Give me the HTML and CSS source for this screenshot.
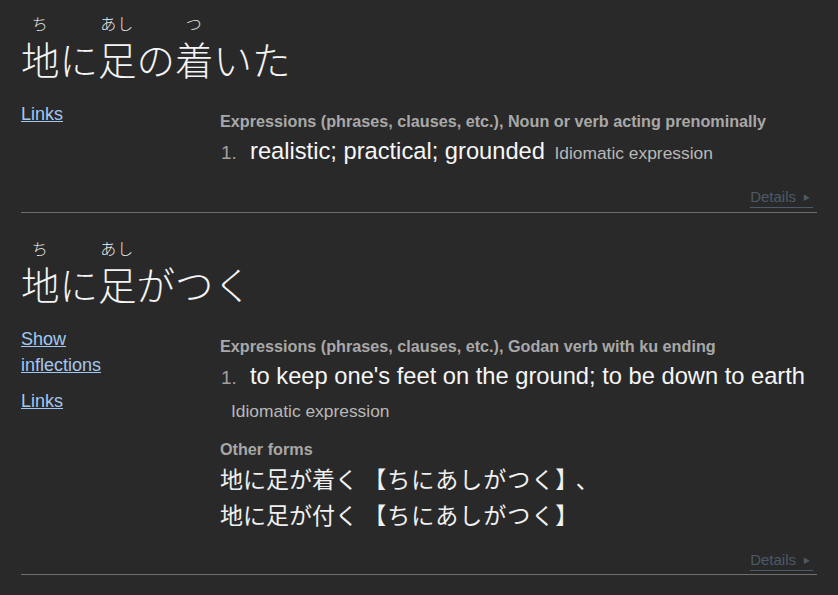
FILE: index.html
```html
<!DOCTYPE html>
<html lang="ja">
<head>
    <meta charset="UTF-8">
    <meta name="viewport" content="width=device-width, initial-scale=1.0">
    <title>地に足 - 検索結果</title>
    <link rel="stylesheet" href="styles.css">
</head>
<body>
    <div class="results">
        <div class="concept">
            <div class="representation">
                <div class="furigana">
                    <span class="kana">ち</span><span class="kana"></span><span class="kana">あし</span><span class="kana"></span><span class="kana">つ</span>
                </div>
                <div class="text">地に足の着いた</div>
            </div>
            <div class="concept-body">
                <div class="status">
                    <a href="#" class="side-link">Links</a>
                </div>
                <div class="meanings">
                    <div class="tags">Expressions (phrases, clauses, etc.), Noun or verb acting prenominally</div>
                    <div class="meaning">
                        <span class="num">1.</span><span class="meaning-text">realistic; practical; grounded</span>
                        <span class="supplement">Idiomatic expression</span>
                    </div>
                </div>
            </div>
            <div class="details-row">
                <a href="#" class="details">Details<span class="arrow">▶</span></a>
            </div>
        </div>

        <div class="concept">
            <div class="representation">
                <div class="furigana">
                    <span class="kana">ち</span><span class="kana"></span><span class="kana">あし</span>
                </div>
                <div class="text">地に足がつく</div>
            </div>
            <div class="concept-body">
                <div class="status">
                    <a href="#" class="side-link">Show inflections</a>
                    <a href="#" class="side-link">Links</a>
                </div>
                <div class="meanings">
                    <div class="tags">Expressions (phrases, clauses, etc.), Godan verb with ku ending</div>
                    <div class="meaning">
                        <span class="num">1.</span><span class="meaning-text">to keep one's feet on the ground; to be down to earth</span>
                        <span class="supplement block">Idiomatic expression</span>
                    </div>
                    <div class="tags forms-label">Other forms</div>
                    <div class="forms">
                        <span>地に足が着く <span class="reading">【ちにあしがつく】</span><span class="comma">、</span></span>
                        <span>地に足が付く <span class="reading">【ちにあしがつく】</span></span>
                    </div>
                </div>
            </div>
            <div class="details-row">
                <a href="#" class="details">Details<span class="arrow">▶</span></a>
            </div>
        </div>
    </div>
</body>
</html>
```

FILE: styles.css
```css
body {
    margin: 0;
    background-color: #292929;
    color: #f0f0f0;
    font-family: "Liberation Sans", Arial, "Noto Sans CJK JP", sans-serif;
}
.results {
    padding: 0 21px 0 21px;
}
.concept {
    border-bottom: 1px solid #6e6e6e;
}
.representation {
    padding-top: 12px;
    font-family: "Noto Sans CJK JP", sans-serif;
    font-weight: 300;
}
.furigana {
    display: flex;
    height: 22px;
    font-size: 16px;
    line-height: 22px;
    color: #e8e8e8;
}
.furigana .kana {
    width: 38.5px;
    text-align: center;
    letter-spacing: 1px;
}
.text {
    font-size: 38.5px;
    line-height: 44px;
    margin-top: 2px;
    color: #f4f4f4;
}
.concept-body {
    display: grid;
    grid-template-columns: 199px 1fr;
    margin-top: 21px;
}
.status {
    display: flex;
    flex-direction: column;
    align-items: flex-start;
    gap: 10px;
    max-width: 110px;
}
.side-link {
    color: #a3c8ef;
    font-size: 18px;
    line-height: 26px;
}
.meanings {
    padding-top: 10px;
}
.tags {
    color: #a8a8a8;
    font-weight: bold;
    font-size: 16.2px;
    line-height: 20px;
}
.meaning {
    margin-top: 5px;
    line-height: 30px;
}
.num {
    display: inline-block;
    width: 29px;
    padding-left: 1px;
    color: #a0a0a0;
    font-size: 19px;
}
.meaning-text {
    font-size: 23.7px;
    color: #f6f6f6;
}
.supplement {
    color: #b8b8b8;
    font-size: 17.4px;
    margin-left: 5px;
}
.supplement.block {
    display: block;
    margin-left: 11px;
    line-height: 26px;
    margin-top: 4px;
}
.forms-label {
    margin-top: 15px;
}
.forms {
    display: flex;
    flex-direction: column;
    margin-top: 1px;
    font-family: "Noto Sans CJK JP", sans-serif;
    font-size: 23px;
    line-height: 36px;
    color: #f0f0f0;
}
.reading {
    letter-spacing: 1px;
}
.comma {
    margin-left: 8px;
}
.details-row {
    display: flex;
    justify-content: flex-end;
    padding: 19px 4px 4px 0;
}
.details {
    color: #4c5967;
    font-size: 15px;
    line-height: 18px;
    text-decoration: none;
    border-bottom: 1px solid #4c5967;
    padding-right: 3px;
}
.arrow {
    font-size: 7px;
    margin-left: 7px;
    vertical-align: 2px;
}
.concept + .concept .representation {
    padding-top: 24px;
}
.concept + .concept .details-row {
    padding-bottom: 3px;
}
```
